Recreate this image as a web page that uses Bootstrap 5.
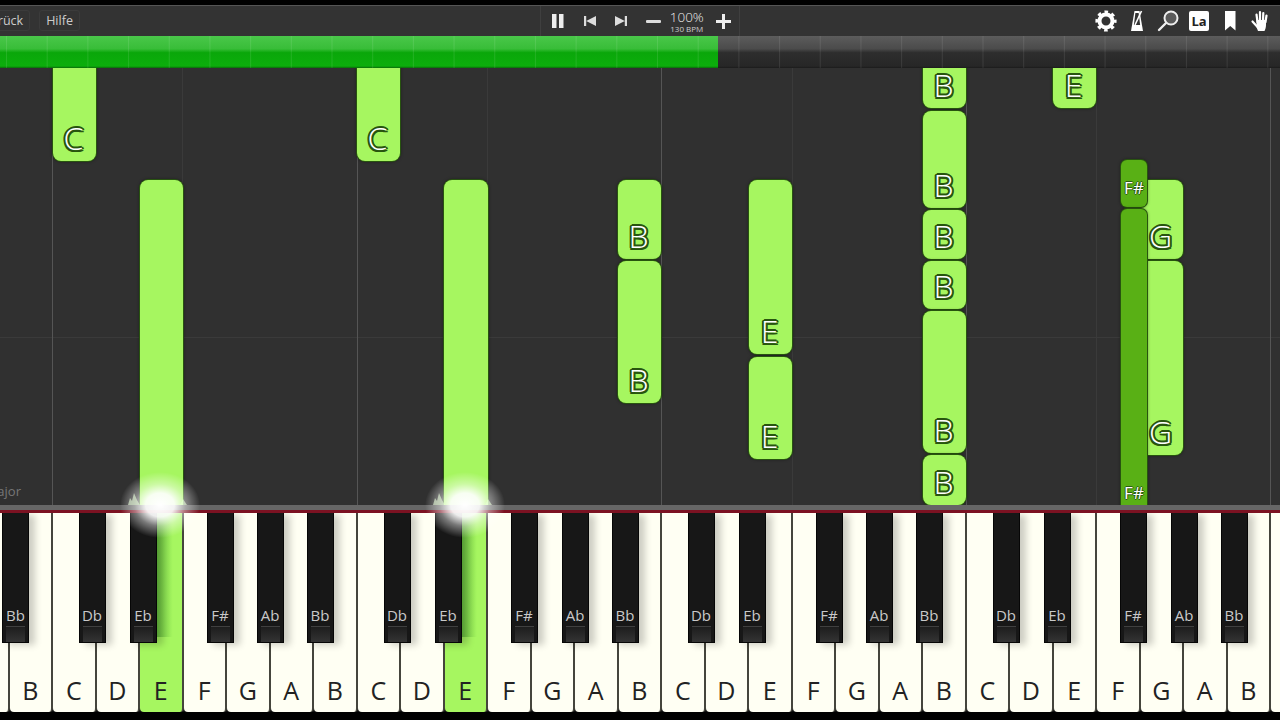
<!DOCTYPE html>
<html>

<head>
  <link href="https://cdn.jsdelivr.net/npm/bootstrap@5.3.2/dist/css/bootstrap.min.css" rel="stylesheet" type="text/css" />
  <style>
    body { background: #000; font-family: "Open Sans", "Liberation Sans", sans-serif; overflow: hidden; }
    .stage { width: 1280px; height: 720px; padding-top: 5px; overflow: hidden; }

    /* toolbar */
    .toolbar { height: 31px; background: #333; border-top: 1px solid #555; color: #ddd; padding: 0 7px; }
    .tool-side { flex: 1 1 0; }
    .menu-btn { font-size: 12.500px; line-height: 19px; padding: 0 6px; margin-bottom: 1px; color: #ccc; border: 1px solid #3b3b3b; border-radius: 3px; --bs-btn-hover-color: #ccc; }
    .menu-back { margin-left: -31px; margin-right: 9px; }
    .tool-mid { width: 200px; flex: none; border-left: 1px solid #3f3f3f; border-right: 1px solid #3f3f3f; }
    .w31 { width: 31px; flex: none; }
    .w34 { width: 33.500px; flex: none; }
    .w36 { width: 36px; flex: none; padding-left: 3px; }
    .speed { color: #eee; line-height: 1; margin-top: 1px; }
    .speed-pct { font-size: 13.500px; line-height: 13px; font-weight: 300; }
    .speed-bpm { font-size: 8px; line-height: 8px; margin-top: 1px; color: #ccc; white-space: nowrap; }
    .tool-right { gap: 7px; }
    .la-box { width: 20px; height: 20px; margin: 0 2px; background: #fff; color: #222; border-radius: 2px; font-size: 13px; font-weight: 700; line-height: 20px; }

    /* progress */
    .song-bar { --bs-progress-height: 32px; --bs-progress-border-radius: 0; background-color: #2a2a2a;
      background-image: linear-gradient(90deg, rgba(255,255,255,.09) 1px, transparent 1px), linear-gradient(#5c5c5c, #4b4b4b 40%, #2d2d2d 52%, #272727 94%, #1b1b1b);
      background-size: 40.7px 100%, 100% 100%; background-position: 6px 0, 0 0; }
    .song-fill { background-color: #0aa80a;
      background-image: linear-gradient(90deg, rgba(255,255,255,.1) 1px, transparent 1px), linear-gradient(#4ac74a, #38bd38 40%, #0aa70a 52%, #0cae0c 94%, #0a6a0a);
      background-size: 40.7px 100%, 100% 100%; background-position: 6px 0, 0 0; }

    /* falling notes */
    .roll { height: 437px; background: #303030; }
    .beat { width: 1px; top: 0; bottom: 0; background: #555; }
    .beat-faint { background: #3a3a3a; }
    .bar-line { height: 1px; left: 0; right: 0; top: 269px; background: #3a3a3a; }
    .key-name-hint { right: calc(100% - 21px); top: 414px; font-size: 13px; color: #777; white-space: nowrap; }
    .note { background: #a6f660; border-radius: 8px; box-shadow: 0 0 0 1px #28540f, 0 0 3px 1px rgba(0,0,0,.35); padding: 0 2px 7px 0; }
    .note-sharp { background: #59b015; border-radius: 6px; padding: 0 0 11px 0; }
    .note-tag { font-size: 32px; line-height: 32px; font-weight: 350; color: #fff;
      text-shadow: 2px 0 #28540f, -2px 0 #28540f, 0 2px #28540f, 0 -2px #28540f, 1.500px 1.500px #28540f, -1.500px 1.500px #28540f, 1.500px -1.500px #28540f, -1.500px -1.500px #28540f; }
    .note-sharp .note-tag { font-size: 17px; line-height: 16px; font-weight: 400;
      text-shadow: 1px 0 #2c5c10, -1px 0 #2c5c10, 0 1px #2c5c10, 0 -1px #2c5c10; }

    /* keyboard */
    .edge-gray { height: 5px; background: #666; }
    .edge-red { height: 3px; background: #7c1222; }
    .keyboard { height: 199px; background: #111; }
    .white-row { margin-left: -34px; width: 1400px; }
    .white-key { width: 43.500px; flex: none; height: 199px; background: #fffff3; border-right: 2px solid #45453c; border-radius: 0 0 4px 4px; color: #222; font-size: 25px; line-height: 1; padding-bottom: 9px; }
    .white-on { background: linear-gradient(90deg, #62bb3c 36%, rgba(166,246,96,0) 78%) no-repeat 0 0 / 100% 124px, #a6f660; }
    .black-key { top: 0; width: 27px; height: 130px; background: #171717; border: 1px solid #060606; border-top: 0; box-shadow: 6px 2px 7px rgba(0,0,0,.2); color: #c9c9c9; font-size: 15px; line-height: 21px; }
    .black-lip { height: 16px; margin: 0 3px; background: linear-gradient(#1d1d1d, #343434); border-top: 1px solid #404040; }
    .flare { width: 80px; height: 66px; top: 472px; background: radial-gradient(ellipse 50% 50% at 50% 50%, #fff 0, rgba(255,255,255,.92) 36%, rgba(255,255,255,.42) 64%, rgba(255,255,255,0) 100%); }
    .flare svg { display: block; opacity: .6; }
  </style>
  <script src="https://cdn.jsdelivr.net/npm/bootstrap@5.3.2/dist/js/bootstrap.bundle.min.js"></script>
</head>

<body class="m-0">
  <div class="stage d-flex flex-column position-relative">

    <header class="toolbar d-flex align-items-center flex-none">
      <div class="tool-side d-flex align-items-center">
        <button type="button" class="btn menu-btn menu-back">Zurück</button>
        <button type="button" class="btn menu-btn">Hilfe</button>
      </div>
      <div class="tool-mid d-flex align-items-center h-100">
        <div class="w34 d-flex justify-content-center">
          <svg width="14" height="14" viewBox="0 0 14 14"><path fill="#eee" d="M1 0h4.500v14H1zM8 0h4.500v14H8z"/></svg>
        </div>
        <div class="w31 d-flex justify-content-center">
          <svg width="12" height="10" viewBox="0 0 12 10"><path fill="#ddd" d="M0 0h2.200v10H0zM12 0v10L2.200 5z"/></svg>
        </div>
        <div class="w31 d-flex justify-content-center">
          <svg width="12" height="10" viewBox="0 0 12 10"><path fill="#ddd" d="M12 0H9.800v10H12zM0 0v10l9.800-5z"/></svg>
        </div>
        <div class="w34 d-flex justify-content-center">
          <svg width="15" height="3" viewBox="0 0 15 3"><rect width="15" height="3" rx="1" fill="#ddd"/></svg>
        </div>
        <div class="w34 speed d-flex flex-column align-items-center">
          <span class="speed-pct">100%</span>
          <span class="speed-bpm">130 BPM</span>
        </div>
        <div class="w36 d-flex justify-content-center">
          <svg width="15" height="15" viewBox="0 0 15 15"><path fill="#eee" d="M6 0h3v6h6v3H9v6H6V9H0V6h6z"/></svg>
        </div>
      </div>
      <div class="tool-side tool-right d-flex align-items-center justify-content-end">
        <svg width="24" height="24" viewBox="0 0 24 24">
          <circle cx="12" cy="12" r="6.500" fill="none" stroke="#fff" stroke-width="4"/>
          <circle cx="12" cy="12" r="9" fill="none" stroke="#fff" stroke-width="3.200" stroke-dasharray="3.500 3.570" stroke-dashoffset="1.750"/>
        </svg>
        <svg width="24" height="24" viewBox="0 0 24 24">
          <path fill="#fff" d="M9.500 2h5l3.500 20H6z"/>
          <path fill="#333" d="M10.400 4h3.200l1.500 12H8.900z"/>
          <path stroke="#fff" stroke-width="1.600" d="M10 16L16.500 2"/>
        </svg>
        <svg width="24" height="24" viewBox="0 0 24 24">
          <circle cx="15" cy="9" r="6.500" fill="#5a5a5a" stroke="#eee" stroke-width="2"/>
          <path stroke="#eee" stroke-width="2.400" stroke-linecap="round" d="M10 14l-7 7"/>
        </svg>
        <div class="la-box text-center">La</div>
        <svg width="24" height="24" viewBox="0 0 24 24"><path fill="#fff" d="M7 2h10.500v19.500l-5.250-4.500L7 21.500z"/></svg>
        <svg width="24" height="24" viewBox="0 0 24 24">
          <path fill="#fff" d="M7.500 11h9.500v5c0 2.500-.8 4.500-1.500 6H9c-.5-1.500-1.500-3-1.500-5z"/>
          <path fill="none" stroke="#fff" stroke-width="2.200" stroke-linecap="round" d="M8.500 13L7.500 5.500M11 12V3M14 12l.3-8M16.500 13l1-6.500M8.500 18L3.500 12.500"/>
        </svg>
      </div>
    </header>

    <div class="progress song-bar flex-none" role="progressbar" aria-valuenow="56" aria-valuemin="0" aria-valuemax="100">
      <div class="progress-bar song-fill" id="songFill"></div>
    </div>

    <div class="roll position-relative overflow-hidden flex-none" id="roll">
      <div class="bar-line position-absolute"></div>
      <div class="key-name-hint position-absolute">C Major</div>
    </div>

    <div class="edge-gray flex-none"></div>
    <div class="edge-red flex-none"></div>

    <div class="keyboard position-relative overflow-hidden flex-none" id="keyboard">
      <div class="white-row d-flex" id="whiteRow"></div>
    </div>

    <div class="flare position-absolute rounded-circle" id="flareA">
      <svg width="80" height="66" viewBox="0 0 80 66"><path fill="#eaffdc" d="M8 33l2-7 2 3 2-8 3 7 3 5zM60 33l3-6 2 3 2 3z"/></svg>
    </div>
    <div class="flare position-absolute rounded-circle" id="flareB">
      <svg width="80" height="66" viewBox="0 0 80 66"><path fill="#eaffdc" d="M8 33l2-7 2 3 2-8 3 7 3 5zM60 33l3-6 2 3 2 3z"/></svg>
    </div>
  </div>

  <script>
    const ROLL_TOP = 68

    // x, width, top, bottom, label
    const notes = [
      [53, 43, 50, 161, 'C'], [357, 43, 50, 161, 'C'],
      [140, 43, 180, 530, ''], [444, 44, 180, 530, ''],
      [618, 43, 180, 259, 'B'], [618, 43, 261, 403, 'B'],
      [749, 43, 180, 354, 'E'], [749, 43, 357, 459, 'E'],
      [923, 43, 50, 108, 'B'], [923, 43, 111, 208, 'B'], [923, 43, 210, 259, 'B'],
      [923, 43, 261, 309, 'B'], [923, 43, 311, 453, 'B'], [923, 43, 455, 505, 'B'],
      [1053, 43, 50, 108, 'E'],
      [1140, 43, 180, 259, 'G'], [1140, 43, 261, 455, 'G']
    ]
    const sharps = [
      [1121, 26, 160, 207, 'F#'], [1121, 26, 209, 512, 'F#']
    ]

    const roll = document.querySelector('#roll')
    document.querySelector('#songFill').style.width = (718 / 1280 * 100) + '%'

    // bar lines and the fainter beat lines between them
    const beats = [[52, 0], [182, 1], [357, 0], [487, 1], [661, 0], [792, 1], [966, 0], [1096, 1], [1270, 0]]
    beats.forEach(b => {
      const line = document.createElement('div')
      line.className = 'beat position-absolute' + (b[1] ? ' beat-faint' : '')
      line.style.left = b[0] + 'px'
      roll.appendChild(line)
    })

    function addNote(n, extra) {
      const el = document.createElement('div')
      el.className = 'note position-absolute d-flex flex-column justify-content-end align-items-center ' + extra
      el.style.left = n[0] + 'px'
      el.style.width = n[1] + 'px'
      el.style.top = (n[2] - ROLL_TOP) + 'px'
      el.style.height = (n[3] - n[2]) + 'px'
      if (n[4]) {
        const tag = document.createElement('span')
        tag.className = 'note-tag'
        tag.textContent = n[4]
        el.appendChild(tag)
      }
      roll.appendChild(el)
    }
    notes.forEach(n => addNote(n, ''))
    sharps.forEach(n => addNote(n, 'note-sharp'))

    // white keys, first and last are cut by the window
    const whiteRow = document.querySelector('#whiteRow')
    const whites = ['', 'B', 'C', 'D', 'E', 'F', 'G', 'A', 'B', 'C', 'D', 'E', 'F', 'G', 'A', 'B', 'C', 'D', 'E', 'F', 'G', 'A', 'B', 'C', 'D', 'E', 'F', 'G', 'A', 'B', '']
    whites.forEach((name, i) => {
      const key = document.createElement('div')
      key.className = 'white-key d-flex justify-content-center align-items-end' + (i === 4 || i === 11 ? ' white-on' : '')
      key.textContent = name
      whiteRow.appendChild(key)
    })

    const blacks = [[15.5, 'Bb'], [92, 'Db'], [143, 'Eb'], [220, 'F#'], [270, 'Ab'], [320, 'Bb'], [397, 'Db'], [448, 'Eb'], [524, 'F#'], [575, 'Ab'], [625, 'Bb'], [701, 'Db'], [752, 'Eb'], [829, 'F#'], [879, 'Ab'], [929, 'Bb'], [1006, 'Db'], [1057, 'Eb'], [1133, 'F#'], [1184, 'Ab'], [1234, 'Bb']]
    const keyboard = document.querySelector('#keyboard')
    blacks.forEach(b => {
      const key = document.createElement('div')
      key.className = 'black-key position-absolute d-flex flex-column justify-content-end text-center'
      key.style.left = (b[0] - 13.5) + 'px'
      key.innerHTML = `<span>${b[1]}</span><div class="black-lip"></div>`
      keyboard.appendChild(key)
    })

    document.querySelector('#flareA').style.left = (160 - 40) + 'px'
    document.querySelector('#flareB').style.left = (465 - 40) + 'px'
  </script>
</body>

</html>
